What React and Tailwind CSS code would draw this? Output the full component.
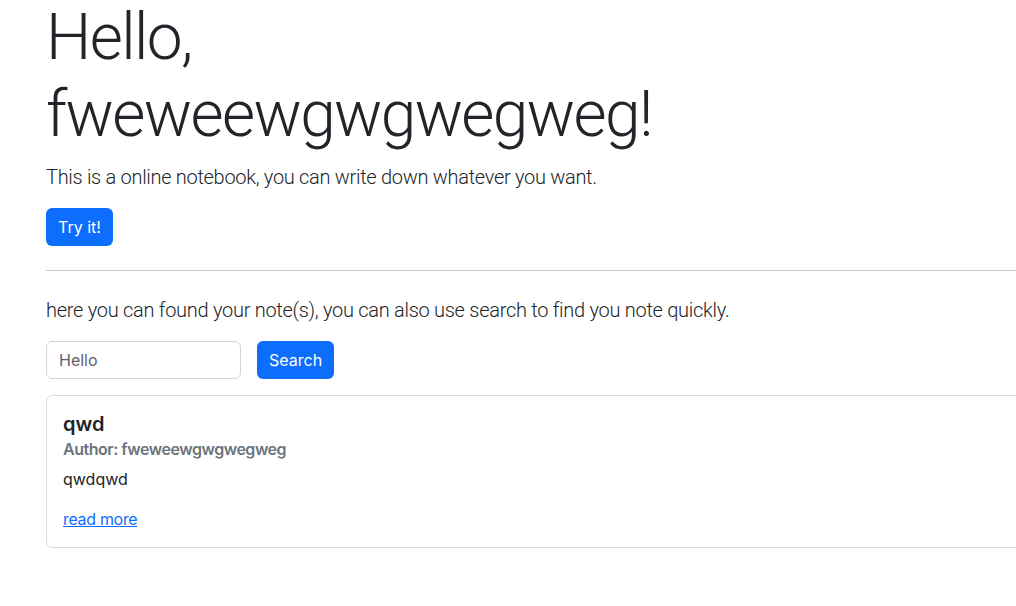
export default function App() {
  return (
    <div className="w-screen min-h-screen overflow-hidden bg-white text-[#212529] font-['Inter','Liberation_Sans',sans-serif]">
      <div className="pl-[46px] w-[1120px]">
        <h1 className="text-[64px] leading-[1.2] font-light mb-2 tracking-[-0.025em] font-['Roboto','Inter',sans-serif]">
          Hello,
          <br />
          fweweewgwgwegweg!
        </h1>
        <p className="text-[20px] leading-[30px] font-light mb-4 tracking-[-0.015em] font-['Roboto','Inter',sans-serif]">
          This is a online notebook, you can write down whatever you want.
        </p>
        <button className="h-[38px] px-3 rounded-md bg-[#0d6efd] text-white text-base leading-6">
          Try it!
        </button>

        <hr className="my-6 border-0 border-t border-[#c8c9ca]" />

        <p className="text-[20px] leading-[30px] font-light mb-4 tracking-[-0.014em] font-['Roboto','Inter',sans-serif]">
          here you can found your note(s), you can also use search to find you note quickly.
        </p>

        <form className="flex items-center gap-4 mb-4" onSubmit={e => e.preventDefault()}>
          <input
            defaultValue="Hello"
            className="w-[195px] h-[38px] px-3 text-base text-[#5c636a] border border-[#ced4da] rounded-md focus:outline-none"
          />
          <button type="submit" className="h-[38px] px-3 rounded-md bg-[#0d6efd] text-white text-base leading-6">
            Search
          </button>
        </form>

        {/* Note card */}
        <div className="border border-[#dcdcdc] rounded-md p-4">
          <h5 className="text-[20px] leading-[24px] font-semibold mb-2">qwd</h5>
          <h6 className="-mt-1 mb-2 text-base leading-[19.2px] font-semibold tracking-[-0.03em] text-[#6c757d]">
            Author: fweweewgwgwegweg
          </h6>
          <p className="text-base leading-6 mb-4">qwdqwd</p>
          <a href="#" className="text-base leading-6 tracking-[-0.02em] text-[#0d6efd] underline">
            read more
          </a>
        </div>
      </div>
    </div>
  );
}
